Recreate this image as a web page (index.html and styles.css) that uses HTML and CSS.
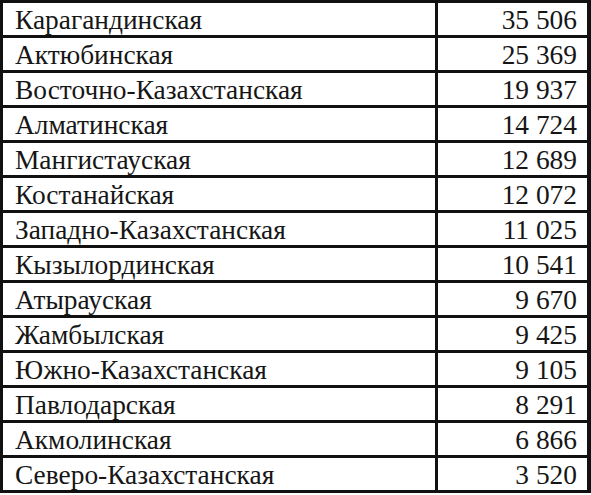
FILE: index.html
```html
<!DOCTYPE html>
<html lang="ru">
<head>
<meta charset="utf-8">
<link rel="stylesheet" href="styles.css">
</head>
<body>
<div class="table">
  <div class="name">Карагандинская</div><div class="num">35 506</div>
  <div class="name">Актюбинская</div><div class="num">25 369</div>
  <div class="name">Восточно-Казахстанская</div><div class="num">19 937</div>
  <div class="name">Алматинская</div><div class="num">14 724</div>
  <div class="name">Мангистауская</div><div class="num">12 689</div>
  <div class="name">Костанайская</div><div class="num">12 072</div>
  <div class="name">Западно-Казахстанская</div><div class="num">11 025</div>
  <div class="name">Кызылординская</div><div class="num">10 541</div>
  <div class="name">Атырауская</div><div class="num">9 670</div>
  <div class="name">Жамбылская</div><div class="num">9 425</div>
  <div class="name">Южно-Казахстанская</div><div class="num">9 105</div>
  <div class="name">Павлодарская</div><div class="num">8 291</div>
  <div class="name">Акмолинская</div><div class="num">6 866</div>
  <div class="name">Северо-Казахстанская</div><div class="num">3 520</div>
</div>
</body>
</html>
```
FILE: styles.css
```css
html, body {
  margin: 0;
  padding: 0;
  background: #ffffff;
}
.table {
  width: 591px;
  box-sizing: border-box;
  display: grid;
  grid-template-columns: 432px 149px;
  grid-auto-rows: 32px;
  gap: 3px;
  padding: 3px 4px 3px 3px;
  background: #111111;
  font-family: "Liberation Serif", "DejaVu Serif", serif;
  font-size: 27.4px;
  color: #161616;
}
.table > div {
  background: #ffffff;
  line-height: 34px;
  white-space: nowrap;
  overflow: hidden;
}
.name {
  padding-left: 12px;
}
.num {
  text-align: right;
  padding-right: 10px;
}
```
